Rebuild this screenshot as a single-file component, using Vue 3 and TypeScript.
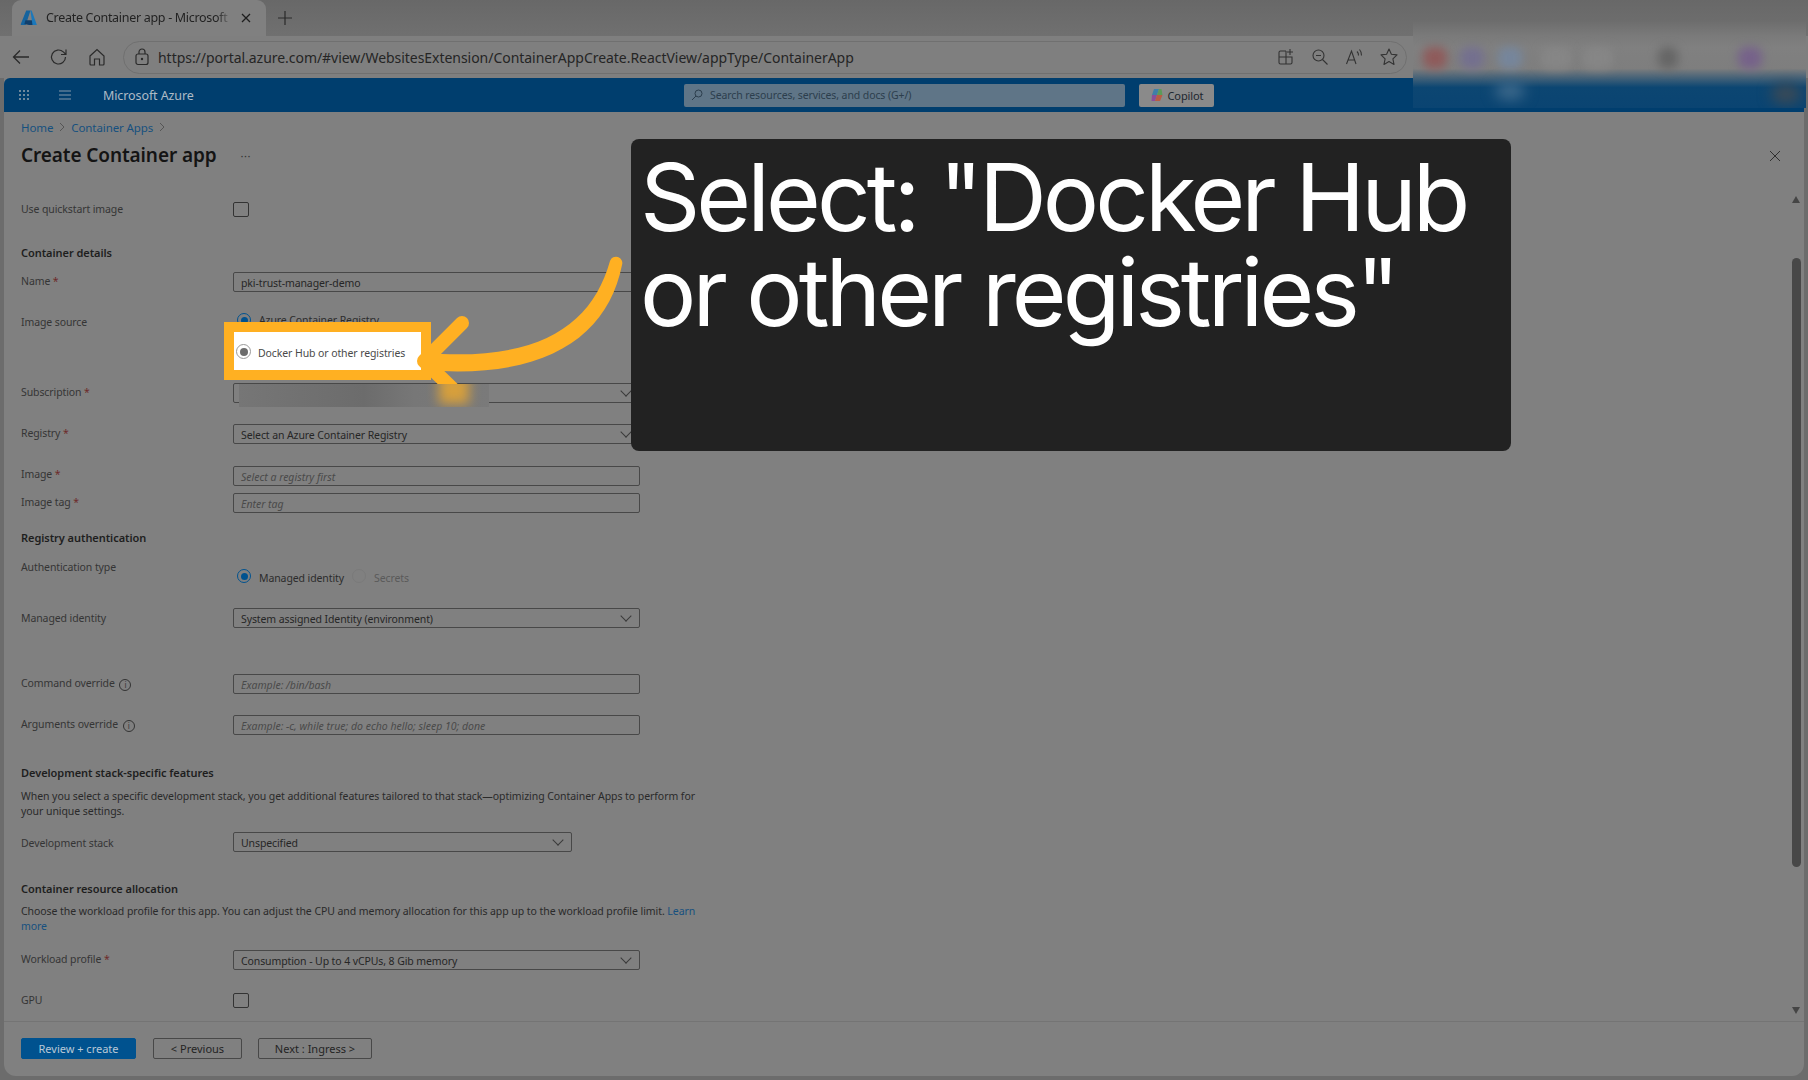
<script setup lang="ts">
const dots: number[] = [0, 1, 2, 3, 4, 5, 6, 7, 8]
const blobs: { c: string; x: number; w: number }[] = [
  { c: '#8f5b5b', x: 10, w: 24 },
  { c: '#74708f', x: 47, w: 24 },
  { c: '#76869c', x: 85, w: 24 },
  { c: '#868686', x: 128, w: 30 },
  { c: '#868686', x: 170, w: 30 },
  { c: '#666666', x: 245, w: 20 },
  { c: '#76628a', x: 325, w: 24 }
]
</script>

<template>
  <div class="page">
    <div class="tabstrip">
      <div class="tab">
        <svg class="azure" width="18" height="18" viewBox="0 0 18 18">
          <path d="M6.2 1.500h4.300L5.900 15.600a.8.8 0 0 1-.7.5H1.500a.7.7 0 0 1-.7-1z" fill="#14639e" />
          <path d="M12.600 11.300H5.400l-1 3.600 4.600 1.200h6.200z" fill="#103f6c" />
          <path d="M10.400 1.500h1.200l5.300 14.600h-4.400z" fill="#1b78bb" />
        </svg>
        <span class="tabtitle">Create Container app - Microsoft</span>
        <svg class="tabx" width="12" height="12" viewBox="0 0 12 12"><path d="M2 2l8 8M10 2l-8 8" stroke="#1e1e1e" stroke-width="1.300" /></svg>
      </div>
      <svg class="plus" width="16" height="16" viewBox="0 0 16 16"><path d="M8 1v14M1 8h14" stroke="#2a2a2a" stroke-width="1.200" /></svg>
    </div>

    <div class="toolbar">
      <svg class="tb back" width="20" height="20" viewBox="0 0 20 20"><path d="M18 10H2.500M9 3.500L2.500 10 9 16.500" fill="none" stroke="#2a2a2a" stroke-width="1.300" /></svg>
      <svg class="tb reload" width="20" height="20" viewBox="0 0 20 20"><path d="M16.500 10a7 7 0 1 1-2.200-5.100L17 7.500M17 2.500v5h-5" fill="none" stroke="#2a2a2a" stroke-width="1.200" /></svg>
      <svg class="tb home" width="20" height="20" viewBox="0 0 20 20"><path d="M3 9l7-6.500L17 9v8a1 1 0 0 1-1 1h-3.500v-6h-5v6H4a1 1 0 0 1-1-1z" fill="none" stroke="#2a2a2a" stroke-width="1.200" /></svg>
      <div class="address">
        <svg class="lock" width="16" height="18" viewBox="0 0 16 18"><rect x="2" y="6" width="12" height="10.500" rx="2" fill="none" stroke="#2a2a2a" stroke-width="1.200" /><path d="M5 6V4a3 3 0 0 1 6 0v2" fill="none" stroke="#2a2a2a" stroke-width="1.200" /><circle cx="8" cy="11" r="1.200" fill="#2a2a2a" /></svg>
        <span class="url">https://portal.azure.com/#view/WebsitesExtension/ContainerAppCreate.ReactView/appType/ContainerApp</span>
        <svg class="ai first" width="18" height="18" viewBox="0 0 18 18"><path d="M9 3H3.500A1.500 1.500 0 0 0 2 4.500v10A1.500 1.500 0 0 0 3.500 16h10a1.500 1.500 0 0 0 1.500-1.500V9H2M9 3v13M13 1v6M10 4h6" fill="none" stroke="#333" stroke-width="1.100" /></svg>
        <svg class="ai" width="18" height="18" viewBox="0 0 18 18"><circle cx="7.500" cy="7.500" r="5.500" fill="none" stroke="#333" stroke-width="1.100" /><path d="M11.500 11.500L16.500 16.500M5 7.500h5" stroke="#333" stroke-width="1.100" /></svg>
        <svg class="ai" width="18" height="18" viewBox="0 0 18 18"><path d="M1.500 16L6.500 3l4.500 13M3 12h7M12 3.500a5 5 0 0 1 1.500 4M14.500 1.500a8 8 0 0 1 2 6" fill="none" stroke="#333" stroke-width="1.100" /></svg>
        <svg class="ai" width="20" height="20" viewBox="0 0 20 20"><path d="M10 2l2.400 5.200 5.600.7-4.100 3.900 1.100 5.600L10 14.600l-5 2.800 1.100-5.600L2 7.900l5.600-.7z" fill="none" stroke="#333" stroke-width="1.100" stroke-linejoin="round" /></svg>
      </div>
    </div>

    <div class="app">
      <header class="topbar">
        <div class="waffle"><i v-for="d in dots" :key="d"></i></div>
        <svg class="burger" width="14" height="12" viewBox="0 0 14 12"><path d="M1 2h12M1 6h12M1 10h12" stroke="#8498aa" stroke-width="1" /></svg>
        <span class="brand">Microsoft Azure</span>
        <div class="search">
          <svg width="12" height="12" viewBox="0 0 12 12"><circle cx="7.500" cy="4.500" r="3.500" fill="none" stroke="#2c3e4d" stroke-width="1" /><path d="M5 7l-4 4" stroke="#2c3e4d" stroke-width="1" /></svg>
          <span>Search resources, services, and docs (G+/)</span>
        </div>
        <div class="copilot">
          <svg width="14" height="14" viewBox="0 0 14 14">
            <path d="M4 1h5L7 7H2z" fill="#3f7fa8" />
            <path d="M9 1h2.500L12.500 7H7z" fill="#5c9a5a" />
            <path d="M2 7h5l-2 6H1.500z" fill="#8a4f9a" />
            <path d="M7 7h5.500L10 13H5z" fill="#b85c44" />
          </svg>
          <span>Copilot</span>
        </div>
      </header>

      <main class="blade">
        <div class="form">
          <nav class="crumbs">
            <a>Home</a>
            <svg width="6" height="10" viewBox="0 0 6 10"><path d="M1 1l4 4-4 4" fill="none" stroke="#555" stroke-width="1" /></svg>
            <a>Container Apps</a>
            <svg width="6" height="10" viewBox="0 0 6 10"><path d="M1 1l4 4-4 4" fill="none" stroke="#555" stroke-width="1" /></svg>
          </nav>
          <div class="titlerow">
            <h1>Create Container app</h1>
            <span class="more">···</span>
          </div>

          <div class="row r-quick">
            <label class="lab l0">Use quickstart image</label>
            <span class="check"></span>
          </div>

          <h2 class="h-details">Container details</h2>
          <div class="row r-name">
            <label class="lab l2">Name <b>*</b></label>
            <div class="field">pki-trust-manager-demo</div>
          </div>

          <div class="row r-source">
            <label class="lab l2">Image source</label>
            <div class="radios">
              <div class="radio"><span class="dot on"></span><span>Azure Container Registry</span></div>
              <div class="radio second"><span class="dot grey"></span><span>Docker Hub or other registries</span></div>
            </div>
          </div>

          <div class="row r-sub">
            <label class="lab">Subscription <b>*</b></label>
            <div class="field select"></div>
          </div>
          <div class="row r-reg">
            <label class="lab">Registry <b>*</b></label>
            <div class="field select">Select an Azure Container Registry</div>
          </div>
          <div class="row r-img">
            <label class="lab l1">Image <b>*</b></label>
            <div class="field ph">Select a registry first</div>
          </div>
          <div class="row r-tag">
            <label class="lab">Image tag <b>*</b></label>
            <div class="field ph">Enter tag</div>
          </div>

          <h2 class="h-auth">Registry authentication</h2>
          <div class="row r-authtype">
            <label class="lab l1">Authentication type</label>
            <div class="radio inline">
              <span class="dot on"></span><span>Managed identity</span>
              <span class="dot off"></span><span class="muted">Secrets</span>
            </div>
          </div>
          <div class="row r-mi">
            <label class="lab l3">Managed identity</label>
            <div class="field select">System assigned Identity (environment)</div>
          </div>

          <div class="row r-cmd">
            <label class="lab l2">Command override <span class="info">i</span></label>
            <div class="field ph">Example: /bin/bash</div>
          </div>
          <div class="row r-args">
            <label class="lab l2">Arguments override <span class="info">i</span></label>
            <div class="field ph">Example: -c, while true; do echo hello; sleep 10; done</div>
          </div>

          <h2 class="h-dev">Development stack-specific features</h2>
          <p class="p-dev">When you select a specific development stack, you get additional features tailored to that stack—optimizing Container Apps to perform for your unique settings.</p>
          <div class="row r-dev">
            <label class="lab l4">Development stack</label>
            <div class="field select short">Unspecified</div>
          </div>

          <h2 class="h-res">Container resource allocation</h2>
          <p class="p-res">Choose the workload profile for this app. You can adjust the CPU and memory allocation for this app up to the workload profile limit. <a>Learn more</a></p>
          <div class="row r-work">
            <label class="lab l2">Workload profile <b>*</b></label>
            <div class="field select">Consumption - Up to 4 vCPUs, 8 Gib memory</div>
          </div>
          <div class="row r-gpu">
            <label class="lab l0">GPU</label>
            <span class="check"></span>
          </div>
        </div>

        <footer class="footer">
          <button class="btn primary">Review + create</button>
          <button class="btn prev">&lt; Previous</button>
          <button class="btn next">Next : Ingress &gt;</button>
        </footer>
      </main>
    </div>

    <!-- overlays -->
    <svg class="close" width="12" height="12" viewBox="0 0 12 12"><path d="M1 1l10 10M11 1L1 11" stroke="#303030" stroke-width="1" /></svg>
    <div class="sb-up"></div>
    <div class="sb-thumb"></div>
    <div class="sb-down"></div>

    <div class="blurbar">
      <i v-for="b in blobs" :key="b.x" :style="{ background: b.c, left: b.x + 'px', width: b.w + 'px' }"></i>
      <span class="blob-light"></span>
      <span class="blob-dark"></span>
    </div>

    <div class="callout">Select: "Docker Hub<br />or other registries"</div>
    <div class="hilite"><span class="dot grey big"></span><span>Docker Hub or other registries</span></div>

    <svg class="arrow" width="1808" height="1080" viewBox="0 0 1808 1080">
      <path d="M610 261C592 325 540 362 425 353L425 370C548 380 608 335 622 265A6 6 0 0 0 610 261Z" fill="#ffb022" />
      <path d="M462 323L424 361L460 396" fill="none" stroke="#ffb022" stroke-width="14" stroke-linecap="round" stroke-linejoin="round" />
    </svg>

    <div class="redact"><i></i></div>
  </div>
</template>

<style>
html, body { margin: 0; background: #6c6c6c; }
</style>

<style scoped>
.page {
  position: relative;
  width: 1808px;
  height: 1080px;
  overflow: hidden;
  background: #6c6c6c;
  display: flex;
  flex-direction: column;
  font-family: "Noto Sans", "Open Sans", sans-serif;
  font-size: 10.500px;
  letter-spacing: -0.100px;
  color: #2c2c2c;
}
.tabstrip {
  height: 36px;
  flex: none;
  display: flex;
  align-items: center;
  padding-left: 12px;
  background: linear-gradient(#686868, #707070);
}
.tab {
  width: 254px;
  height: 36px;
  display: flex;
  align-items: center;
  padding-left: 8px;
  box-sizing: border-box;
  background: #808080;
  border-radius: 9px 9px 0 0;
}
.azure { flex: none; }
.tabtitle {
  margin: -2px 0 0 8px;
  width: 186px;
  font-size: 12.500px;
  letter-spacing: -0.300px;
  white-space: nowrap;
  overflow: hidden;
  color: #222;
  -webkit-mask-image: linear-gradient(90deg, #000 92%, transparent);
  mask-image: linear-gradient(90deg, #000 92%, transparent);
}
.tabx { margin-left: 8px; flex: none; }
.plus { margin-left: 11px; }
.toolbar {
  height: 42px;
  flex: none;
  display: flex;
  align-items: center;
  padding-left: 11px;
  background: #7f7f7f;
}
.tb { flex: none; }
.reload { margin-left: 18px; }
.home { margin-left: 18px; }
.address {
  margin-left: 16px;
  width: 1284px;
  height: 33px;
  box-sizing: border-box;
  display: flex;
  align-items: center;
  padding-left: 10px;
  border: 1px solid #707070;
  border-radius: 17px;
}
.lock { flex: none; }
.url {
  margin-left: 8px;
  font-size: 14px;
  letter-spacing: -0.040px;
  color: #252525;
  white-space: nowrap;
  flex: 1;
}
.ai { flex: none; margin-left: 16px; }
.ai:last-child { margin-right: 7px; }
.app {
  margin: 0 4px 4px;
  flex: 1;
  min-height: 0;
  display: flex;
  flex-direction: column;
  background: #808080;
  border-radius: 0 0 12px 12px;
}
.topbar {
  height: 34px;
  flex: none;
  background: #003e6e;
  display: flex;
  align-items: center;
  padding-left: 15px;
  border-radius: 6px 6px 0 0;
}
.waffle {
  width: 11px;
  display: grid;
  grid-template-columns: repeat(3, 2px);
  gap: 2px;
}
.waffle i { width: 2px; height: 2px; background: #6f889c; }
.burger { margin-left: 28px; }
.brand {
  margin-left: 31px;
  width: 581px;
  font-size: 12.500px;
  color: #aebbc6;
}
.search {
  width: 441px;
  height: 23px;
  box-sizing: border-box;
  display: flex;
  align-items: center;
  gap: 7px;
  padding-left: 7px;
  background: #5f7587;
  border-radius: 2px;
  color: #2c3e4d;
  font-size: 10.500px;
}
.copilot {
  margin-left: 14px;
  width: 75px;
  height: 23px;
  box-sizing: border-box;
  display: flex;
  align-items: center;
  justify-content: center;
  gap: 4px;
  background: #8a8a8a;
  border-radius: 2px;
  color: #1d2730;
  font-size: 11px;
}
.blade { flex: 1; min-height: 0; display: flex; flex-direction: column; }
.form {
  height: 909px;
  flex: none;
  box-sizing: border-box;
  padding: 7px 0 0 17px;
  overflow: hidden;
}
.crumbs {
  height: 16px;
  display: flex;
  align-items: center;
  gap: 6px;
  color: #16507f;
  font-size: 11.500px;
}
.titlerow {
  margin-top: 6px;
  height: 28px;
  display: flex;
  align-items: center;
}
h1 {
  margin: 0;
  font-size: 19px;
  font-weight: 600;
  letter-spacing: -0.100px;
  color: #141414;
}
.more { margin-left: 24px; color: #333; font-size: 11px; letter-spacing: 0.500px; }
h2 {
  margin: 0;
  font-size: 11px;
  line-height: 14px;
  font-weight: 600;
  letter-spacing: -0.050px;
  color: #1e1e1e;
}
p {
  margin: 0;
  width: 682px;
  line-height: 15px;
  letter-spacing: -0.060px;
  color: #2a2a2a;
}
p a, .crumbs a { color: #16507f; }
.row { display: flex; align-items: flex-start; }
.lab {
  width: 212px;
  flex: none;
  line-height: 14px;
  margin-top: 2px;
  color: #353535;
}
.lab b { font-weight: 400; color: #6d2a2a; }
.l0 { margin-top: 0; }
.l1 { margin-top: 1px; }
.l2 { margin-top: 2px; }
.l3 { margin-top: 3px; }
.l4 { margin-top: 4px; }
.info {
  display: inline-block;
  width: 10px;
  height: 10px;
  margin-left: 2px;
  border: 1px solid #333;
  border-radius: 50%;
  text-align: center;
  font-size: 8px;
  line-height: 10px;
  vertical-align: -1px;
}
.field {
  position: relative;
  width: 407px;
  height: 20px;
  box-sizing: border-box;
  border: 1px solid #484848;
  border-radius: 2px;
  padding-left: 7px;
  line-height: 21px;
  color: #262626;
  white-space: nowrap;
}
.field.ph { font-style: italic; color: #4a4a4a; letter-spacing: 0; }
.field.short { width: 339px; }
.field.select::after {
  content: "";
  position: absolute;
  right: 9px;
  top: 3px;
  width: 7px;
  height: 7px;
  border-right: 1px solid #3a3a3a;
  border-bottom: 1px solid #3a3a3a;
  transform: rotate(45deg);
}
.check {
  width: 16px;
  height: 15px;
  box-sizing: border-box;
  border: 1px solid #333;
  border-radius: 2px;
}
.radios { display: flex; flex-direction: column; gap: 17px; }
.radio {
  height: 14px;
  display: flex;
  align-items: center;
  color: #2c2c2c;
}
.dot {
  width: 14px;
  height: 14px;
  box-sizing: border-box;
  flex: none;
  margin: 0 8px 0 4px;
  border: 1px solid #c8c8c8;
  border-radius: 50%;
  background: #808080;
  position: relative;
}
.dot::after {
  content: "";
  position: absolute;
  inset: 2.500px;
  border-radius: 50%;
  background: transparent;
}
.dot.on { border-color: #00528f; }
.dot.on::after { background: #00528f; }
.dot.grey { background: transparent; border-color: #9a9a9a; }
.dot.grey::after { background: #6c6c6c; }
.dot.off { border-color: #7a7a7a; margin-left: 8px; }
.muted { color: #5a5a5a; }
.inline { margin-top: 10px; }
.inline span:not(.dot) { padding-top: 3px; }

.r-quick { margin-top: 33px; }
.h-details { margin-top: 29px; }
.r-name { margin-top: 12px; }
.r-source { margin-top: 21px; }
.r-sub { margin-top: 25px; }
.r-reg { margin-top: 21px; }
.r-img { margin-top: 22px; }
.r-tag { margin-top: 7px; }
.h-auth { margin-top: 18px; }
.r-authtype { margin-top: 14px; }
.r-mi { margin-top: 25px; }
.r-cmd { margin-top: 46px; }
.r-args { margin-top: 21px; }
.h-dev { margin-top: 31px; }
.p-dev { margin-top: 9px; }
.r-dev { margin-top: 13px; }
.h-res { margin-top: 30px; }
.p-res { margin-top: 8px; }
.r-work { margin-top: 16px; }
.r-gpu { margin-top: 23px; }

.footer {
  flex: 1;
  display: flex;
  align-items: flex-start;
  padding: 16px 0 0 17px;
  border-top: 1px solid #747474;
}
.btn {
  height: 21px;
  box-sizing: border-box;
  padding: 0;
  font: inherit;
  font-size: 11px;
  border: 1px solid #484848;
  border-radius: 2px;
  background: transparent;
  color: #242424;
}
.primary { width: 115px; background: #00528f; border-color: #00528f; color: #b9c8d6; }
.prev { width: 89px; margin-left: 17px; }
.next { width: 114px; margin-left: 16px; }

.close { position: absolute; left: 1769px; top: 150px; }
.sb-up, .sb-down {
  position: absolute;
  left: 1792px;
  width: 0;
  height: 0;
  border-left: 4.500px solid transparent;
  border-right: 4.500px solid transparent;
}
.sb-up { top: 196px; border-bottom: 7px solid #454545; }
.sb-down { top: 1007px; border-top: 7px solid #454545; }
.sb-thumb {
  position: absolute;
  left: 1792px;
  top: 258px;
  width: 9px;
  height: 609px;
  border-radius: 5px;
  background: #484848;
}
.blurbar {
  position: absolute;
  left: 1413px;
  top: 22px;
  width: 393px;
  height: 86px;
  overflow: hidden;
  background: linear-gradient(#6e6e6e 0, #7a7a7a 16%, #808080 30%, #7e7e7e 54%, #0c4672 76%, #0a4472 100%);
}
.blurbar i {
  position: absolute;
  top: 25px;
  height: 22px;
  filter: blur(5px);
  border-radius: 8px;
}
.blob-light, .blob-dark {
  position: absolute;
  border-radius: 50%;
  filter: blur(7px);
}
.blob-light { left: 82px; top: 60px; width: 30px; height: 18px; background: #3f6a8c; }
.blob-dark { left: 358px; top: 62px; width: 30px; height: 20px; background: #3d4a55; }
.callout {
  position: absolute;
  left: 631px;
  top: 139px;
  width: 880px;
  height: 312px;
  box-sizing: border-box;
  padding: 11px 0 0 9px;
  background: #222222;
  border-radius: 8px;
  color: #ffffff;
  font-family: "Inter", sans-serif;
  font-size: 94px;
  line-height: 95px;
  letter-spacing: -3.950px;
  white-space: nowrap;
}
.hilite {
  position: absolute;
  left: 224px;
  top: 322px;
  width: 207px;
  height: 58px;
  box-sizing: border-box;
  border: 10px solid #ffb022;
  background: #ffffff;
  display: flex;
  align-items: center;
  padding-top: 4px;
  color: #4a4a4a;
  white-space: nowrap;
}
.dot.big { width: 15px; height: 15px; margin: -3px 7px 0 2px; }
.arrow { position: absolute; left: 0; top: 0; pointer-events: none; }
.redact {
  position: absolute;
  left: 239px;
  top: 384px;
  width: 250px;
  height: 23px;
  background: linear-gradient(90deg, #767676, #6c6c6c 50%, #777 70%, #7a7a7a);
  overflow: hidden;
}
.redact i {
  position: absolute;
  left: 200px;
  top: -10px;
  width: 30px;
  height: 30px;
  background: #ffb022;
  opacity: 0.7;
  filter: blur(6px);
}
</style>
